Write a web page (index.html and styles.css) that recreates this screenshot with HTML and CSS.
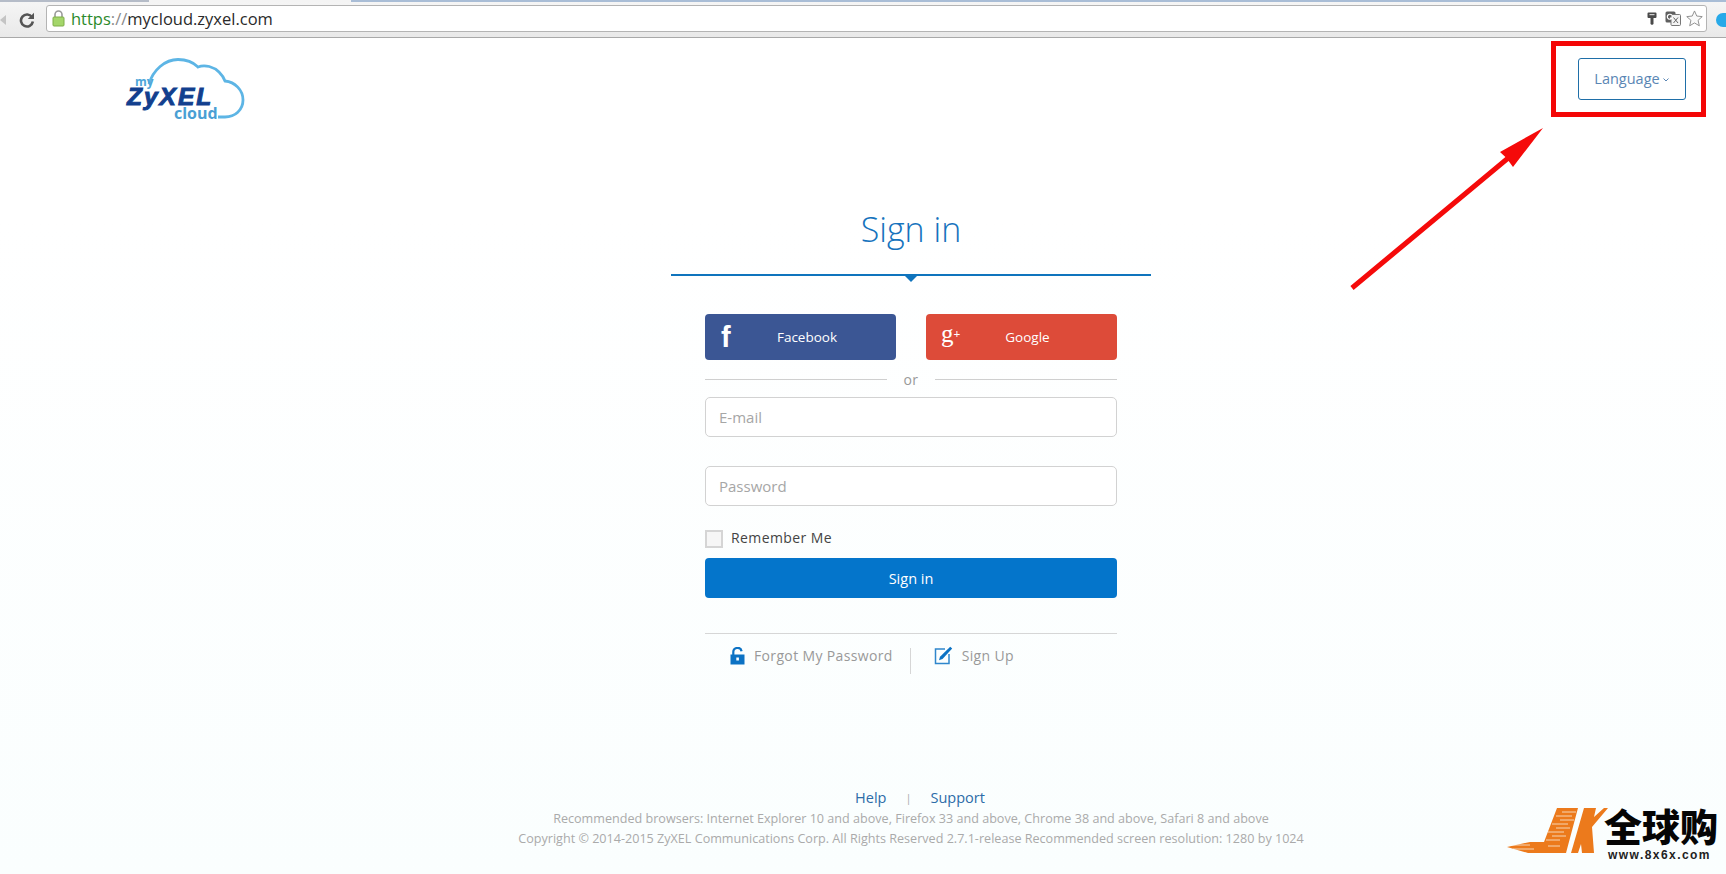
FILE: index.html
```html
<!DOCTYPE html>
<html lang="en">
<head>
<meta charset="utf-8">
<title>myZyXEL cloud - Sign in</title>
<link rel="stylesheet" href="styles.css">
</head>
<body>
<div class="page">
  <div class="tabstrip"><span class="tab-a"></span><span class="tab-b"></span><span class="tab-c"></span></div>
  <div class="toolbar">
    <svg class="back" width="6" height="14" viewBox="0 0 6 14"><path d="M6 2 L0 7 L6 12Z" fill="#c4c4c4"/></svg>
    <svg class="reload" width="16" height="16" viewBox="0 0 16 16"><path d="M13 5.200A6 6 0 1 0 13.900 9.500" fill="none" stroke="#555" stroke-width="2.600"/><path d="M15 0.800V7H8.800Z" fill="#555"/></svg>
    <div class="omnibox">
      <svg class="lock" width="13" height="17" viewBox="0 0 13 17"><path d="M3 8V4.500a3.500 3.500 0 0 1 7 0V8" fill="none" stroke="#9a9a9a" stroke-width="1.600"/><rect x="1" y="7" width="11" height="9" rx="1" fill="#a4d66a" stroke="#7fae48"/></svg>
      <div class="url"><span class="scheme">https</span><span class="sep">://</span>mycloud.zyxel.com</div>
      <div class="omni-icons">
        <svg class="key-icon" width="10" height="13" viewBox="0 0 10 13"><path d="M1.500 0.500h7a1 1 0 0 1 1 1v3.500a1 1 0 0 1-1 1H6.500V12L5 13 3.500 12V6H1.500a1 1 0 0 1-1-1V1.500a1 1 0 0 1 1-1Z" fill="#4a4a4a"/><rect x="2.500" y="2" width="5" height="1.200" fill="#cfcfcf"/></svg>
        <svg width="16" height="15" viewBox="0 0 16 15"><rect x="0.500" y="0.500" width="10" height="11" rx="1.500" fill="#5f5f5f"/><rect x="6" y="3.500" width="9.500" height="11" rx="1" fill="#f3f3f3" stroke="#777"/><path d="M8.500 6.500l4.500 5.500M13 6.500L8.500 12" stroke="#666"/><path d="M6.800 4.200A2.500 2.500 0 1 0 7 7H5" fill="none" stroke="#fff" stroke-width="1.200"/></svg>
        <svg width="17" height="17" viewBox="0 0 18 18"><path d="M9 1l2.400 5.400 5.800.6-4.400 3.900 1.300 5.800L9 13.700l-5.100 3 1.300-5.800L.8 7l5.800-.6Z" fill="#fafafa" stroke="#8c8c8c"/></svg>
      </div>
    </div>
    <span class="ext-dot"></span>
  </div>

  <header class="site-header">
    <a class="logo">
      <svg class="cloud" width="122" height="61" viewBox="0 0 122 61"><path d="M24 26C28 12 40 1.500 53 1.500C61 1.500 68 4 73 9C80 6 89 9 94 14C97 17 99 20 100 23C110 24 118 32 118 42C118 52 110 59 100 59H93" fill="none" stroke="#5db5e5" stroke-width="2.800"/></svg>
      <span class="logo-my">my</span>
      <span class="logo-zyxel">ZyXEL</span>
      <span class="logo-cloud">cloud</span>
    </a>
    <button class="lang-btn"><span class="lang-text">Language</span><svg class="lang-caret" width="6" height="4" viewBox="0 0 6 4"><path d="M0.500 0.500L3 3l2.500-2.500" fill="none" stroke="#5a86b4"/></svg></button>
  </header>

  <div class="content">
    <main class="signin">
      <h1 class="title">Sign in</h1>
      <div class="title-rule"></div>
      <div class="form">
        <div class="social">
          <a class="social-btn fb">
            <span class="social-icon f-icon">f</span>
            <span class="social-label">Facebook</span>
          </a>
          <a class="social-btn gp">
            <span class="social-icon g-icon">g<small>+</small></span>
            <span class="social-label">Google</span>
          </a>
        </div>
        <div class="or"><span class="or-line"></span><span class="or-text">or</span><span class="or-line"></span></div>
        <div class="field first">E-mail</div>
        <div class="field">Password</div>
        <label class="remember"><span class="check"></span><span class="remember-text">Remember Me</span></label>
        <button class="submit">Sign in</button>
        <div class="links">
          <a class="link forgot">
            <svg width="15" height="18" viewBox="0 0 15 18"><path d="M3.300 8V5.200a4.200 4.200 0 0 1 8.300-1" fill="none" stroke="#0c72c4" stroke-width="2.200"/><path d="M0.500 7.500h14v10H.5Z" fill="#0c72c4"/><rect x="6.300" y="10.500" width="2.600" height="3" fill="#fff"/></svg>
            Forgot My Password
          </a>
          <span class="links-sep"></span>
          <a class="link signup">
            <svg width="19" height="19" viewBox="0 0 19 19"><path d="M11 3H1.500v14.500H15V8" fill="none" stroke="#2f86cc" stroke-width="1.500"/><path d="M16.200 0.800l2 1.700L8.500 13l-3.500 1.200 1-3.500Z" fill="#0c72c4"/></svg>
            Sign Up
          </a>
        </div>
      </div>
    </main>

    <footer class="site-footer">
      <div class="foot-links"><a>Help</a><span class="foot-sep">|</span><a>Support</a></div>
      <p class="foot-line">Recommended browsers: Internet Explorer 10 and above, Firefox 33 and above, Chrome 38 and above, Safari 8 and above</p>
      <p class="foot-line">Copyright © 2014-2015 ZyXEL Communications Corp. All Rights Reserved 2.7.1-release Recommended screen resolution: 1280 by 1024</p>
    </footer>
  </div>

  <div class="callout-box"></div>
  <svg class="callout-arrow" width="200" height="170" viewBox="0 0 200 170"><path d="M0.400 161L155.400 32L150 27L193 3L163 42L158.600 36L3.600 165Z" fill="#f50a0a"/></svg>

  <div class="watermark">
    <svg class="wm-logo" width="120" height="60" viewBox="0 0 120 60">
      <path d="M57 8H78L66 53H28L7 47L30 42H44Z" fill="#ec7a1c"/>
      <path d="M84 8H96L94 17L104 8H108L92 27L94 53H82L81 44L78 53H71Z" fill="#ec7a1c"/>
      <path d="M62 12H76M56 16H72M60 20H74M52 24H68M56 28H70M48 32H64M52 36H66M46 40H60M9 45H30M13 49H34M48 46H60" stroke="#fbfdf8" stroke-width="0.700"/>
    </svg>
    <div class="wm-text">
      <div class="wm-cn">全球购</div>
      <div class="wm-url">www.8x6x.com</div>
    </div>
  </div>
</div>
</body>
</html>
```

FILE: styles.css
```css
* { box-sizing: border-box; }
html, body { margin: 0; padding: 0; }
body { font-family: "Open Sans", "Liberation Sans", sans-serif; }
.page {
  position: relative;
  width: 1726px;
  height: 874px;
  overflow: hidden;
  background: linear-gradient(180deg, #ffffff 0%, #ffffff 25%, #fafefe 100%);
}
a { text-decoration: none; color: inherit; }

/* browser chrome */
.tabstrip { display: flex; height: 2px; background: #f2f2f2; }
.tab-a { width: 149px; background: #b5bcc8; }
.tab-b { width: 202px; background: #f4f4f4; }
.tab-c { flex: 1; background: #a9bdd6; }
.toolbar {
  display: flex;
  align-items: center;
  height: 36px;
  background: linear-gradient(180deg, #f5f5f5, #e9e9e9);
  border-bottom: 1px solid #a9a9a9;
}
.back { margin-right: 13px; }
.reload { margin-right: 11px; }
.omnibox {
  display: flex;
  align-items: center;
  width: 1662px;
  height: 27px;
  margin-top: -2px;
  padding: 0 0 0 5px;
  background: #fff;
  border: 1px solid #b4b4b4;
  border-radius: 3px;
}
.lock { margin-right: 6px; }
.url { flex: 1; font-size: 16.500px; color: #2a2a2a; white-space: nowrap; }
.scheme { color: #2c8a2c; }
.sep { color: #8a8a8a; }
.omni-icons { display: flex; align-items: center; gap: 5px; padding-right: 3px; }
.key-icon { margin-right: 3px; }
.ext-dot { width: 10px; height: 14px; margin-left: 9px; background: #27a9e8; border-radius: 7px 0 0 7px; }

/* header */
.site-header {
  display: flex;
  justify-content: space-between;
  align-items: flex-start;
  padding: 20px 40px 0 125px;
  height: 162px;
}
.logo { position: relative; display: block; width: 122px; height: 61px; }
.cloud { position: absolute; left: 0; top: 0; }
.logo-my { position: absolute; left: 10px; top: 18px; font: 700 12px/12px "Open Sans", sans-serif; color: #4ea6d9; }
.logo-zyxel { position: absolute; left: 2px; top: 30px; font: italic 900 24.500px/18px "Liberation Sans", sans-serif; color: #123f8e; -webkit-text-stroke: 1px #123f8e; letter-spacing: 2px; }
.logo-cloud { position: absolute; left: 49px; top: 49px; font: 700 16px/13px "Open Sans", sans-serif; color: #4a9fd4; }
.lang-btn {
  display: flex;
  align-items: center;
  justify-content: center;
  gap: 3px;
  width: 108px;
  height: 42px;
  background: #fff;
  border: 1px solid #1f6fa8;
  border-radius: 3px;
  font: 400 14.500px "Open Sans", sans-serif;
  color: #5a86b4;
  padding: 0 1px 0 0;
}
.lang-text { margin-top: -2px; }
.lang-caret { margin-top: 2px; }

/* main column sits right of the window centre */
.content { padding-left: 96px; }

/* sign-in */
.signin { width: 480px; margin: 0 auto; }
.title {
  margin: 0;
  height: 74px;
  padding-top: 6px;
  font-size: 34px;
  font-weight: 300;
  line-height: 46px;
  text-align: center;
  color: #1673bd;
}
.title-rule { position: relative; height: 2px; background: #0f74bd; }
.title-rule::after {
  content: "";
  position: absolute;
  left: 234px;
  top: 2px;
  border-left: 6px solid transparent;
  border-right: 6px solid transparent;
  border-top: 6px solid #0f74bd;
}
.form { width: 412px; margin: 38px auto 0; }
.social { display: flex; justify-content: space-between; }
.social-btn {
  position: relative;
  display: flex;
  align-items: center;
  justify-content: center;
  width: 191px;
  height: 46px;
  border-radius: 4px;
  color: #fff;
  font-size: 13.500px;
  font-weight: 500;
  padding-left: 13px;
}
.social-btn.gp { padding-left: 12px; }
.fb { background: #3b5694; }
.gp { background: #dd4b39; }
.social-icon { position: absolute; color: #fff; }
.f-icon { left: 16px; top: 6px; font: 700 29px/34px "Liberation Sans", sans-serif; }
.g-icon { left: 15px; top: 7px; font: 400 25px/26px "Liberation Serif", serif; }
.g-icon small { font-size: 12px; font-weight: 700; vertical-align: 4px; }
.or { display: flex; align-items: center; gap: 15px; height: 37px; padding-top: 2px; }
.or-line { flex: 1; height: 1px; background: #cfcfcf; }
.or-text { font-size: 14px; color: #999; line-height: 18px; letter-spacing: 0.5px; padding: 0 1px; }
.field {
  display: flex;
  align-items: center;
  height: 40px;
  margin-top: 29px;
  padding: 0 13px;
  background: #fff;
  border: 1px solid #d2d2d2;
  border-radius: 5px;
  font-size: 15px;
  color: #a6a6a6;
}
.field.first { margin-top: 0; }
.remember {
  display: flex;
  align-items: center;
  gap: 8px;
  height: 18px;
  margin-top: 24px;
  font-size: 14px;
  color: #444;
  letter-spacing: 0.4px;
}
.remember-text { margin-top: -4px; }
.check { width: 18px; height: 18px; background: #f6f6f6; border: 2px solid #d5d5d5; }
.submit {
  display: block;
  width: 100%;
  height: 40px;
  margin-top: 10px;
  background: #0475cb;
  border: 0;
  border-radius: 4px;
  color: #fff;
  font: 400 14.500px "Open Sans", sans-serif;
}
.links {
  display: flex;
  justify-content: flex-start;
  height: 41px;
  margin-top: 35px;
  padding-top: 11px;
  border-top: 1px solid #d6d6d6;
  font-size: 14px;
  color: #999;
  letter-spacing: 0.35px;
}
.link { display: flex; align-items: center; gap: 9px; height: 21px; white-space: nowrap; }
.forgot { margin-left: 25px; }
.links-sep { width: 1px; height: 26px; margin: 3px 23px 0 17px; background: #d6d6d6; }

/* footer */
.site-footer { margin-top: 114px; text-align: center; font-size: 12.600px; color: #aaa; }
.foot-links { display: flex; justify-content: center; height: 21px; padding-left: 18px; font-size: 14.500px; line-height: 20px; color: #2d6ca8; }
.foot-sep { margin: 0 19px; font-size: 11px; color: #aaa; }
.foot-line { margin: 0; height: 20px; line-height: 20px; white-space: nowrap; }

/* annotations */
.callout-box {
  position: absolute;
  left: 1551px;
  top: 41px;
  width: 155px;
  height: 76px;
  border: 5px solid #f40606;
}
.callout-arrow { position: absolute; left: 1350px; top: 125px; }

/* watermark */
.watermark {
  position: absolute;
  left: 1500px;
  top: 800px;
  display: flex;
  align-items: flex-start;
}
.wm-logo { flex: none; margin-right: -16px; }
.wm-text { padding-top: 2px; }
.wm-cn { font: 900 38px/46px "Noto Sans CJK SC", sans-serif; color: #050505; white-space: nowrap; }
.wm-url { font: 700 12px/14px "Liberation Sans", sans-serif; letter-spacing: 1.450px; color: #222; padding-left: 4px; white-space: nowrap; }
```
